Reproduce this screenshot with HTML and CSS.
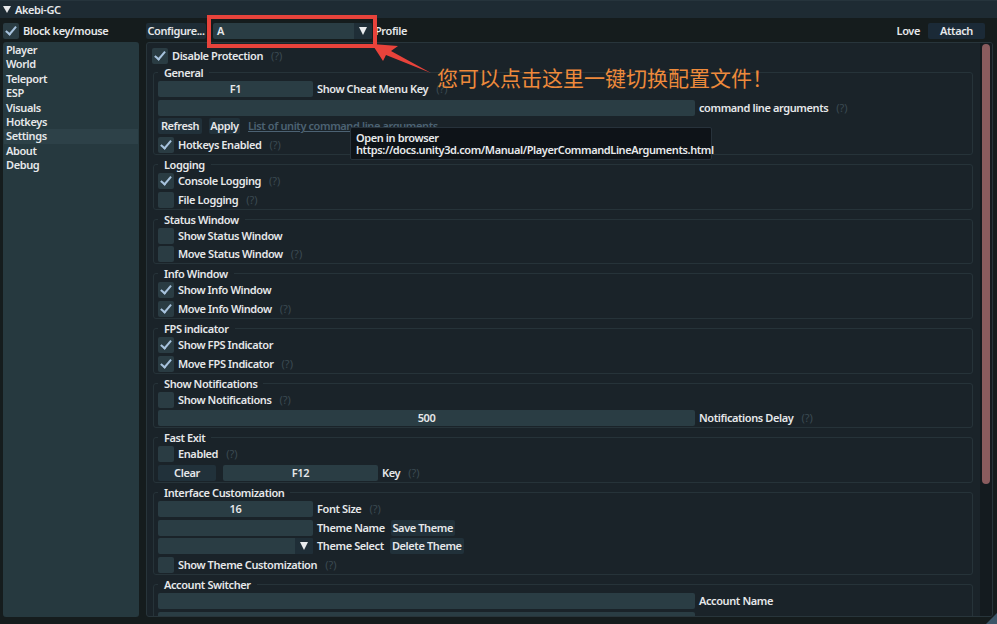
FILE: index.html
```html
<!DOCTYPE html>
<html>
<head>
<meta charset="utf-8">
<link rel="stylesheet" href="styles.css">
</head>
<body>
<div class="window">
  <div class="titlebar"><span class="tri"></span><span>Akebi-GC</span></div>
  <div class="topbar">
    <div class="top-left">
      <div class="check"><span class="box on"></span><span>Block key/mouse</span></div>
    </div>
    <div class="tools">
      <span class="btn dark w-configure">Configure...</span>
      <span class="combo w-profile"><span class="combo-val">A</span><span class="combo-arrow"></span></span>
      <span class="lbl-inner">Profile</span>
      <span class="spacer"></span>
      <span>Love</span>
      <span class="btn attach">Attach</span>
    </div>
  </div>
  <div class="main">
    <nav class="sidebar">
      <div class="item">Player</div>
      <div class="item">World</div>
      <div class="item">Teleport</div>
      <div class="item">ESP</div>
      <div class="item">Visuals</div>
      <div class="item">Hotkeys</div>
      <div class="item active">Settings</div>
      <div class="item">About</div>
      <div class="item">Debug</div>
    </nav>
    <div class="child">
      <div class="content">
        <div class="row"><span class="box on"></span><span>Disable Protection</span><span class="help">(?)</span></div>

        <fieldset class="group first">
          <legend>General</legend>
          <div class="row"><span class="input w-short">F1</span><span>Show Cheat Menu Key</span><span class="help">(?)</span></div>
          <div class="row"><span class="input w-long"></span><span>command line arguments</span><span class="help">(?)</span></div>
          <div class="row"><span class="btn w-refresh">Refresh</span><span class="btn w-apply gap-l">Apply</span><span class="link gap-l">List of unity command line arguments</span></div>
          <div class="row"><span class="box on"></span><span>Hotkeys Enabled</span><span class="help">(?)</span></div>
        </fieldset>

        <fieldset class="group">
          <legend>Logging</legend>
          <div class="row"><span class="box on"></span><span>Console Logging</span><span class="help">(?)</span></div>
          <div class="row"><span class="box"></span><span>File Logging</span><span class="help">(?)</span></div>
        </fieldset>

        <fieldset class="group">
          <legend>Status Window</legend>
          <div class="row"><span class="box"></span><span>Show Status Window</span></div>
          <div class="row"><span class="box"></span><span>Move Status Window</span><span class="help">(?)</span></div>
        </fieldset>

        <fieldset class="group">
          <legend>Info Window</legend>
          <div class="row"><span class="box on"></span><span>Show Info Window</span></div>
          <div class="row"><span class="box on"></span><span>Move Info Window</span><span class="help">(?)</span></div>
        </fieldset>

        <fieldset class="group">
          <legend>FPS indicator</legend>
          <div class="row"><span class="box on"></span><span>Show FPS Indicator</span></div>
          <div class="row"><span class="box on"></span><span>Move FPS Indicator</span><span class="help">(?)</span></div>
        </fieldset>

        <fieldset class="group">
          <legend>Show Notifications</legend>
          <div class="row"><span class="box"></span><span>Show Notifications</span><span class="help">(?)</span></div>
          <div class="row"><span class="input w-long">500</span><span>Notifications Delay</span><span class="help">(?)</span></div>
        </fieldset>

        <fieldset class="group">
          <legend>Fast Exit</legend>
          <div class="row"><span class="box"></span><span>Enabled</span><span class="help">(?)</span></div>
          <div class="row"><span class="btn w-clear">Clear</span><span class="input w-short gap-l">F12</span><span>Key</span><span class="help">(?)</span></div>
        </fieldset>

        <fieldset class="group">
          <legend>Interface Customization</legend>
          <div class="row"><span class="input w-short">16</span><span>Font Size</span><span class="help">(?)</span></div>
          <div class="row"><span class="input w-short"></span><span>Theme Name</span><span class="btn w-save gap-l2">Save Theme</span></div>
          <div class="row"><span class="combo w-short"><span class="combo-val"></span><span class="combo-arrow"></span></span><span>Theme Select</span><span class="btn w-delete gap-l2">Delete Theme</span></div>
          <div class="row"><span class="box"></span><span>Show Theme Customization</span><span class="help">(?)</span></div>
        </fieldset>

        <fieldset class="group">
          <legend>Account Switcher</legend>
          <div class="row"><span class="input w-long"></span><span>Account Name</span></div>
          <div class="row"><span class="input w-long"></span><span>Encryption Key</span></div>
        </fieldset>
      </div>
      <div class="scrollbar"><div class="thumb"></div></div>
    </div>
  </div>
</div>

<div class="grip"></div>

<div class="tooltip">
  <div>Open in browser</div>
  <div>https://docs.unity3d.com/Manual/PlayerCommandLineArguments.html</div>
</div>

<svg class="markup" width="997" height="624" viewBox="0 0 997 624">
  <rect x="209" y="17" width="166" height="29" fill="none" stroke="#e8433b" stroke-width="4"/>
  <polygon points="372,44 398,46 391,51 431,73 386,55 383,61" fill="#e8433b"/>
</svg>
<div class="note">您可以点击这里一键切换配置文件！</div>
</body>
</html>
```
FILE: styles.css
```css
* { box-sizing: border-box; }
html, body { margin: 0; padding: 0; }
body {
  width: 997px;
  height: 624px;
  overflow: hidden;
  position: relative;
  background: #151c1d;
  color: #e6e8ea;
  font-family: "Noto Sans", "DejaVu Sans", sans-serif;
  font-weight: 600;
  font-size: 11px;
  letter-spacing: -0.4px;
  line-height: 16px;
}

.window { display: flex; flex-direction: column; height: 624px; }

.titlebar {
  height: 18px;
  background: #1e2b33;
  border-top: 1px solid #26343c;
  display: flex;
  align-items: center;
  gap: 4px;
  padding-left: 3px;
}
.tri {
  width: 0; height: 0;
  border-left: 4px solid transparent;
  border-right: 4px solid transparent;
  border-top: 7px solid #e6e8ea;
}

.topbar {
  height: 24px;
  display: flex;
  padding: 5px 12px 0 3px;
}
.top-left { width: 143px; }
.tools { flex: 1; display: flex; align-items: center; height: 16px; }
.spacer { flex: 1; }
.lbl-inner { margin-left: 3px; }

.check { display: flex; align-items: center; gap: 4px; height: 16px; }

.box {
  flex: none;
  width: 16px; height: 16px;
  background: #2a3c43;
  border-radius: 2px;
  position: relative;
}
.box.on::after {
  content: "";
  position: absolute;
  left: 5px; top: 1px;
  width: 4px; height: 9px;
  border: solid #a8c3de;
  border-width: 0 2.5px 2.5px 0;
  transform: rotate(40deg);
}

.btn {
  display: inline-block;
  height: 16px;
  background: #21313a;
  border-radius: 2px;
  text-align: center;
  flex: none;
}
.btn.dark { background: #1e2c35; }
.btn.attach { background: #1b2a37; width: 57px; margin-left: 8px; }
.w-configure { width: 60px; }
.w-refresh { width: 44px; }
.w-apply { width: 31px; }
.w-clear { width: 58px; }
.w-save { width: 64px; }
.w-delete { width: 74px; }
.gap-l { margin-left: 3px; }
.gap-l2 { margin-left: 2px; }

.combo {
  display: flex;
  height: 16px;
  background: #2a3d44;
  border-radius: 2px;
  flex: none;
  overflow: hidden;
}
.w-profile { width: 159px; margin-left: 7px; }
.combo-val { flex: 1; padding-left: 4px; }
.combo-arrow {
  width: 18px;
  background: #1f2e37;
  display: flex;
  align-items: center;
  justify-content: center;
}
.combo-arrow::before {
  content: "";
  width: 0; height: 0;
  border-left: 4.5px solid transparent;
  border-right: 4.5px solid transparent;
  border-top: 8px solid #e9ecee;
}

.main {
  height: 575px;
  display: flex;
  gap: 7px;
  padding: 0 4px 0 3px;
}

.sidebar {
  width: 136px;
  flex: none;
  background: #26393f;
  border-radius: 3px;
  padding-top: 1px;
}
.item {
  line-height: 14.4px;
  height: 14.4px;
  padding-left: 2px;
  margin: 0 1px;
}
.item.active { background: #2d4148; }

.child {
  flex: 1;
  display: flex;
  background: #1a2329;
  border: 1px solid #28353b;
  border-radius: 3px;
  overflow: hidden;
}
.content {
  flex: 1;
  min-width: 0;
  overflow: hidden;
  padding: 5px 7px 0 5px;
}
.scrollbar {
  width: 12px;
  flex: none;
  background: #141b1f;
  padding: 1px 2px;
}
.thumb {
  height: 440px;
  background: #8a5c5e;
  border-radius: 4px;
}

.row {
  display: flex;
  align-items: center;
  height: 16px;
  gap: 4px;
  white-space: nowrap;
}
.group .row + .row { margin-top: 2.67px; }

.help { color: #3a4a52; margin-left: 4px; font-weight: 400; letter-spacing: 0; }
.link { color: #4c6273; text-decoration: underline; margin-left: 4px; }

.input {
  display: inline-block;
  height: 16px;
  background: #2a3d44;
  border-radius: 2px;
  text-align: center;
  flex: none;
}
.w-short { width: 155px; }
.w-long { width: 537px; }

.group {
  margin: 3px 0 0 1px;
  padding: 2px 4px 1px 4px;
  border: 1px solid #263339;
  border-radius: 3px;
  min-width: 0;
}
.group.first { margin-top: 2px; }
.group legend {
  padding: 0 6px;
  height: 13px;
  line-height: 13px;
}

.grip {
  position: absolute;
  right: 0; bottom: 0;
  width: 0; height: 0;
  border-left: 11px solid transparent;
  border-bottom: 11px solid #3c5568;
}

.tooltip {
  position: absolute;
  left: 350px; top: 127px;
  width: 362px; height: 33px;
  background: #0e1318;
  border: 1px solid #27323b;
  border-radius: 2px;
  padding: 4px 5px;
  line-height: 12px;
  color: #e8eaec;
}

.markup { position: absolute; left: 0; top: 0; pointer-events: none; }

.note {
  position: absolute;
  left: 437px; top: 64px;
  font-family: "Noto Sans CJK SC", sans-serif;
  font-weight: 400;
  font-size: 21px;
  letter-spacing: 0;
  line-height: 26px;
  color: #ee8a3b;
  white-space: nowrap;
}
```
